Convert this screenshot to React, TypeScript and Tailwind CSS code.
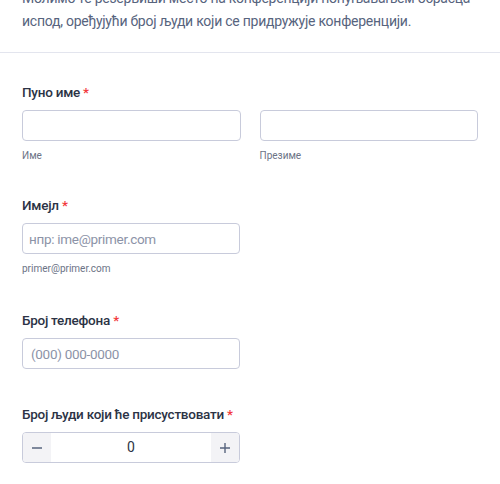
export default function App() {
  return (
    <div className="min-h-[484px] overflow-hidden bg-white font-['Roboto',sans-serif] text-[#2c3345]">
      <header className="-mt-[13px] border-b border-[#e3e5ee] px-[22px] pb-[19px]">
        <p className="text-[14px] leading-[23px] tracking-[-0.25px] text-[#57647e]">
          Молимо те резервиши место на конференцији попуњавањем обрасца испод, оређујући број људи који се придружује конференцији.
        </p>
      </header>

      <form className="flex flex-col px-[22px] pt-[29px]">
        <div>
          <Label text="Пуно име" />
          <div className="grid grid-cols-2 gap-[19px]">
            <div>
              <input className="h-[31px] w-full rounded border border-[#c8cbdb] bg-white px-2 text-sm outline-none" />
              <div className="mt-2 text-[10px] leading-[14px] text-[#6c7386]">Име</div>
            </div>
            <div>
              <input className="h-[31px] w-full rounded border border-[#c8cbdb] bg-white px-2 text-sm outline-none" />
              <div className="mt-2 text-[10px] leading-[14px] text-[#6c7386]">Презиме</div>
            </div>
          </div>
        </div>

        <div className="mt-[32px]">
          <Label text="Имејл" />
          <input
            placeholder="нпр: ime@primer.com"
            className="h-[31px] w-[218px] rounded border border-[#c8cbdb] bg-white px-[6px] text-[13.5px] tracking-[-0.3px] outline-none placeholder:text-[#8c93a7]"
          />
          <div className="mt-2 text-[10px] leading-[14px] text-[#6c7386]">primer@primer.com</div>
        </div>

        <div className="mt-[34px]">
          <Label text="Број телефона" />
          <input
            placeholder="(000) 000-0000"
            className="h-[31px] w-[218px] rounded border border-[#c8cbdb] bg-white px-2 text-[13.5px] tracking-[-0.3px] outline-none placeholder:text-[#8c93a7]"
          />
        </div>

        <div className="mt-[35px]">
          <Label text="Број људи који ће присуствовати" />
          <div className="flex h-[31px] w-[218px] overflow-hidden rounded border border-[#c8cbdb]">
            <button type="button" className="flex w-[28px] items-center justify-center bg-[#f3f3f6] text-[#57647e]">
              <svg width="12" height="12" viewBox="0 0 12 12"><path d="M1 6h10" stroke="currentColor" strokeWidth="1.4" /></svg>
            </button>
            <div className="flex flex-1 items-center justify-center text-[14px] text-[#2c3345]">0</div>
            <button type="button" className="flex w-[28px] items-center justify-center bg-[#f3f3f6] text-[#57647e]">
              <svg width="12" height="12" viewBox="0 0 12 12"><path d="M1 6h10M6 1v10" stroke="currentColor" strokeWidth="1.4" /></svg>
            </button>
          </div>
        </div>
      </form>
    </div>
  );
}

function Label({ text }: { text: string }) {
  return (
    <label className="mb-2 block text-[13.5px] font-medium leading-5 tracking-[-0.25px] text-[#2c3345]">
      {text} <span className="text-[#f23a3c]">*</span>
    </label>
  );
}
